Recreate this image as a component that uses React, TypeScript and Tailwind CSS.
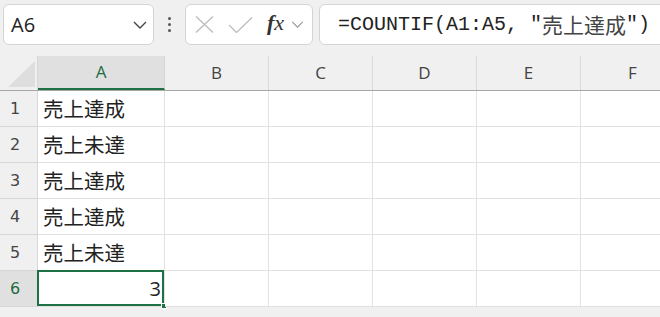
import React from 'react';

const columns = ['A', 'B', 'C', 'D', 'E', 'F'];
const widths = ['w-[127px]', 'w-[104px]', 'w-[104px]', 'w-[104px]', 'w-[104px]', 'w-[104px]'];
const values = ['売上達成', '売上未達', '売上達成', '売上達成', '売上未達'];

function Chevron({ className }: { className?: string }) {
  return (
    <svg className={className} viewBox="0 0 14 8" fill="none">
      <path d="M1 1l6 6 6-6" stroke="currentColor" strokeWidth="1.4" />
    </svg>
  );
}

export default function App() {
  return (
    <div className="w-[660px] h-[317px] overflow-hidden bg-[#f0f0f0] font-['Open_Sans',sans-serif]">
      {/* Formula bar */}
      <div className="flex items-center pt-[4px] pl-[3px] h-[45px]">
        <div className="w-[151px] h-[41px] shrink-0 flex items-center justify-between bg-white border border-[#d4d4d4] rounded-[6px] pl-[7px] pr-[6px]">
          <span className="text-[20px] text-[#222]">A6</span>
          <Chevron className="w-[14px] h-[8px] text-[#444]" />
        </div>
        <div className="w-[31px] shrink-0 flex flex-col items-center gap-[3px]">
          <span className="w-[3px] h-[3px] rounded-full bg-[#555]" />
          <span className="w-[3px] h-[3px] rounded-full bg-[#555]" />
          <span className="w-[3px] h-[3px] rounded-full bg-[#555]" />
        </div>
        <div className="w-[128px] h-[41px] shrink-0 flex items-center bg-white border border-[#d4d4d4] rounded-[6px] pl-[9px]">
          <svg className="w-[19px] h-[17px]" viewBox="0 0 19 17" fill="none">
            <path d="M1 0.5l17 16M18 0.5l-17 16" stroke="#bdbdbd" strokeWidth="1.3" />
          </svg>
          <svg className="ml-[14px] w-[25px] h-[16px]" viewBox="0 0 25 16" fill="none">
            <path d="M1 8l7.5 7.5L24 0.5" stroke="#bdbdbd" strokeWidth="1.3" />
          </svg>
          <span className="ml-[14px] font-['Liberation_Serif',serif] italic text-[22px] leading-none text-[#333] -mt-[3px]">
            <span className="font-bold">f</span>x
          </span>
          <Chevron className="ml-[7px] w-[13px] h-[7px] text-[#999]" />
        </div>
        <div className="ml-[6px] w-[420px] h-[41px] shrink-0 flex items-center bg-white border border-[#d4d4d4] rounded-[6px] pl-[18px] font-['Liberation_Mono','Noto_Sans_CJK_JP',monospace] text-[20px] text-[#222]">
          =COUNTIF(A1:A5, "
          <span className="font-['Noto_Sans_CJK_JP',sans-serif] text-[21px] text-[#444]">売上達成</span>
          ")
        </div>
      </div>

      {/* Sheet */}
      <div className="mt-[11px]">
        {/* Column header row */}
        <div className="flex h-[35px] border-b border-[#a6a6a6]">
          <div className="w-[38px] shrink-0 relative border-r border-[#d6d6d6]">
            <svg className="absolute left-0 top-0 w-[38px] h-[35px]" viewBox="0 0 38 35">
              <path d="M8 31L35 5V31Z" fill="#dedede" />
            </svg>
          </div>
          {columns.map((c, i) => (
            <div
              key={c}
              className={
                widths[i] +
                ' shrink-0 flex items-center justify-center border-r text-[17px] ' +
                (i === 0
                  ? 'bg-[#e0e0e0] border-[#d6d6d6] text-[#1e6b41] border-b-[2px] border-b-[#1e7145]'
                  : 'border-[#dadada] text-[#444]')
              }
            >
              {c}
            </div>
          ))}
        </div>

        {/* Rows */}
        {[1, 2, 3, 4, 5, 6].map((r) => (
          <div key={r} className="flex h-[36px]">
            <div
              className={
                'w-[38px] shrink-0 flex items-center pl-[10px] border-r border-b border-[#d6d6d6] font-["DejaVu_Sans",sans-serif] text-[16px] ' +
                (r === 6 ? 'bg-[#e0e0e0] text-[#1e6b41]' : 'text-[#444]')
              }
            >
              {r}
            </div>
            {columns.map((c, i) => (
              <div
                key={c}
                className={widths[i] + ' shrink-0 relative bg-white border-r border-b border-[#e1e1e1] flex items-center'}
              >
                {i === 0 && r <= 5 && (
                  <span className="pl-[5px] font-['Noto_Sans_CJK_JP',sans-serif] text-[20.5px] text-[#222]">{values[r - 1]}</span>
                )}
                {i === 0 && r === 6 && (
                  <>
                    <span className="ml-auto pr-[3px] font-['Open_Sans',sans-serif] text-[20px] text-[#222]">3</span>
                    <div className="absolute -left-[1px] -top-[1px] -right-[0px] -bottom-[0px] border-2 border-[#1e7145]" />
                    <div className="absolute -right-[3px] -bottom-[3px] w-[6px] h-[6px] bg-[#1e7145] border border-white" />
                  </>
                )}
              </div>
            ))}
          </div>
        ))}
      </div>
    </div>
  );
}
